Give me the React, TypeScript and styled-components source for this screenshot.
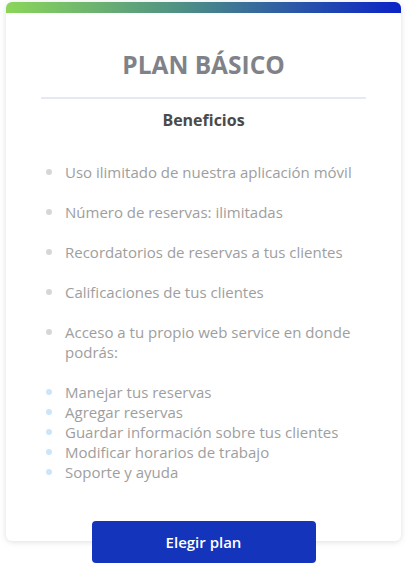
import React from "react";
import styled, { createGlobalStyle } from "styled-components";

const Global = createGlobalStyle`
  html, body { margin: 0; padding: 0; background: #ffffff; }
  body { font-family: "Open Sans", "Noto Sans", sans-serif; -webkit-font-smoothing: antialiased; }
  * { box-sizing: border-box; }
`;

const Page = styled.div`
  padding: 2px 6px 0;
  display: flex;
  flex-direction: column;
  align-items: center;
`;

const Card = styled.section`
  width: 100%;
  background: #ffffff;
  border-radius: 6px;
  overflow: hidden;
  box-shadow: 0 1px 6px rgba(0, 0, 0, 0.13);
  padding-bottom: 59px;
`;

const Bar = styled.div`
  height: 11px;
  background: linear-gradient(90deg, #8bd65a 0%, #4d8f86 45%, #0b22c6 100%);
`;

const Body = styled.div`
  padding: 35px 35px 0;
`;

const Title = styled.h1`
  margin: 0;
  font-size: 24.5px;
  line-height: 34px;
  font-weight: 700;
  color: #7f8389;
  text-align: center;
`;

const Divider = styled.hr`
  margin: 15px 0 0;
  border: 0;
  height: 2px;
  background: #e6e9f3;
`;

const Subtitle = styled.h2`
  margin: 10px 0 0;
  font-size: 16px;
  line-height: 22px;
  font-weight: 700;
  color: #4a4a4a;
  text-align: center;
`;

const List = styled.ul<{ $gap: number }>`
  list-style: none;
  margin: 0;
  padding: 0;
  display: flex;
  flex-direction: column;
  gap: ${(p) => p.$gap}px;
`;

const Item = styled.li<{ $dot: string }>`
  position: relative;
  padding-left: 24px;
  font-size: 15px;
  line-height: 20px;
  color: #9e9e9e;

  &::before {
    content: "";
    position: absolute;
    left: 5px;
    top: 7px;
    width: 6px;
    height: 6px;
    border-radius: 50%;
    background: ${(p) => p.$dot};
  }
`;

const Lists = styled.div`
  margin-top: 31px;
  display: flex;
  flex-direction: column;
  gap: 20px;
`;

const Button = styled.button`
  position: relative;
  margin-top: -20px;
  width: 224px;
  height: 42px;
  border: 0;
  border-radius: 4px;
  background: #1434bb;
  color: #ffffff;
  font-family: "Open Sans", "Noto Sans", sans-serif;
  font-size: 15px;
  font-weight: 600;
  cursor: pointer;
`;

const main = [
  "Uso ilimitado de nuestra aplicación móvil",
  "Número de reservas: ilimitadas",
  "Recordatorios de reservas a tus clientes",
  "Calificaciones de tus clientes",
  "Acceso a tu propio web service en donde podrás:",
];

const sub = [
  "Manejar tus reservas",
  "Agregar reservas",
  "Guardar información sobre tus clientes",
  "Modificar horarios de trabajo",
  "Soporte y ayuda",
];

export default function App() {
  return (
    <>
      <Global />
      <Page>
        <Card>
          <Bar />
          <Body>
            <Title>PLAN BÁSICO</Title>
            <Divider />
            <Subtitle>Beneficios</Subtitle>
            <Lists>
              <List $gap={20}>
                {main.map((t) => (
                  <Item key={t} $dot="#d6d6d6">
                    {t}
                  </Item>
                ))}
              </List>
              <List $gap={0}>
                {sub.map((t) => (
                  <Item key={t} $dot="#cbe5fa">
                    {t}
                  </Item>
                ))}
              </List>
            </Lists>
          </Body>
        </Card>
        <Button>Elegir plan</Button>
      </Page>
    </>
  );
}
